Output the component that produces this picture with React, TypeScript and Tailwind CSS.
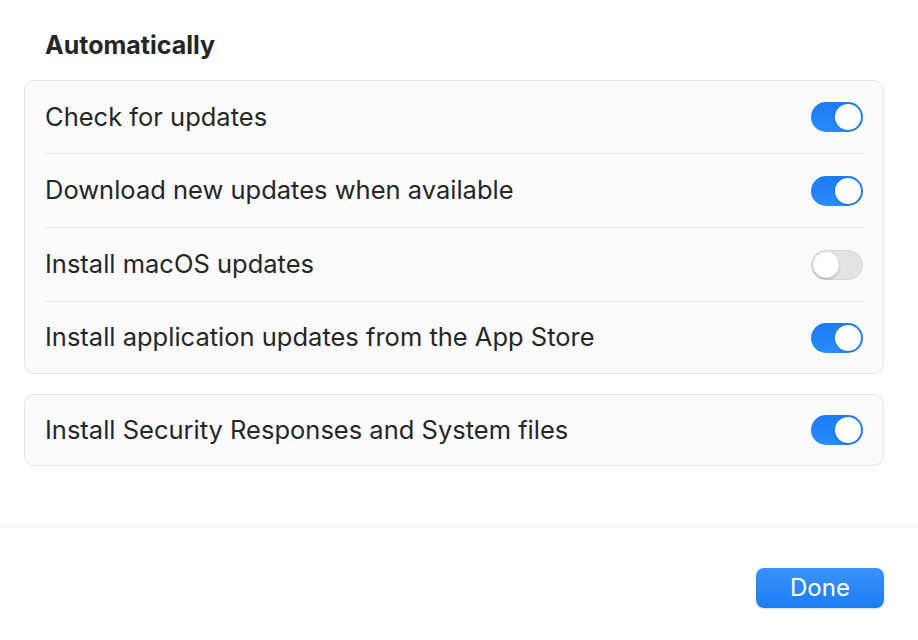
const ROWS = [
  { label: "Check for updates", on: true, h: "h-[73px]" },
  { label: "Download new updates when available", on: true, h: "h-[74px]" },
  { label: "Install macOS updates", on: false, h: "h-[74px]" },
  { label: "Install application updates from the App Store", on: true, h: "h-[71px]" },
];

function Toggle({ on }: { on: boolean }) {
  return (
    <div
      className={
        on
          ? "relative w-[52px] h-[30px] rounded-full bg-gradient-to-b from-[#1a7cf5] to-[#2a8bfa] shrink-0"
          : "relative w-[52px] h-[30px] rounded-full bg-[#e3e3e3] border border-[#d6d6d6] shrink-0"
      }
    >
      <div
        className={
          on
            ? "absolute top-[2px] right-[2px] w-[26px] h-[26px] rounded-full bg-white shadow-[0_1px_2px_rgba(0,0,0,0.25)]"
            : "absolute top-[1px] left-[1px] w-[26px] h-[26px] rounded-full bg-white shadow-[0_1px_2px_rgba(0,0,0,0.3)]"
        }
      />
    </div>
  );
}

function Row({ label, on, h, divider }: { label: string; on: boolean; h: string; divider?: boolean }) {
  return (
    <div className="px-5">
      <div
        className={
          divider
            ? `${h} flex items-center justify-between border-b border-[#e8e8e8]`
            : `${h} flex items-center justify-between`
        }
      >
        <span className="text-[25.5px] text-[#262626]">{label}</span>
        <Toggle on={on} />
      </div>
    </div>
  );
}

export default function App() {
  return (
    <div
      className="w-[918px] h-[640px] bg-white flex flex-col"
      style={{ fontFamily: 'Inter, "Noto Sans", sans-serif' }}
    >
      <div className="pl-6 pr-[34px] pt-[29px]">
        <h2 className="pl-[21px] text-[25px] font-bold text-[#262626] leading-[32px]">Automatically</h2>
        <div className="mt-[19px] rounded-[10px] border border-[#e6e6e6] bg-[#fafafa]">
          {ROWS.map((r, i) => (
            <Row key={r.label} label={r.label} on={r.on} h={r.h} divider={i < ROWS.length - 1} />
          ))}
        </div>
        <div className="mt-5 rounded-[10px] border border-[#e6e6e6] bg-[#fafafa]">
          <Row label="Install Security Responses and System files" on h="h-[70px]" />
        </div>
      </div>
      <div className="mt-[60px] border-t border-[#ececec] flex justify-end px-[34px] pt-[41px]">
        <button className="w-[128px] h-[40px] rounded-[8px] bg-gradient-to-b from-[#3a93fb] to-[#1a7cf5] text-white text-[24px] shadow-[0_1px_2px_rgba(0,0,0,0.15)]">
          Done
        </button>
      </div>
    </div>
  );
}
